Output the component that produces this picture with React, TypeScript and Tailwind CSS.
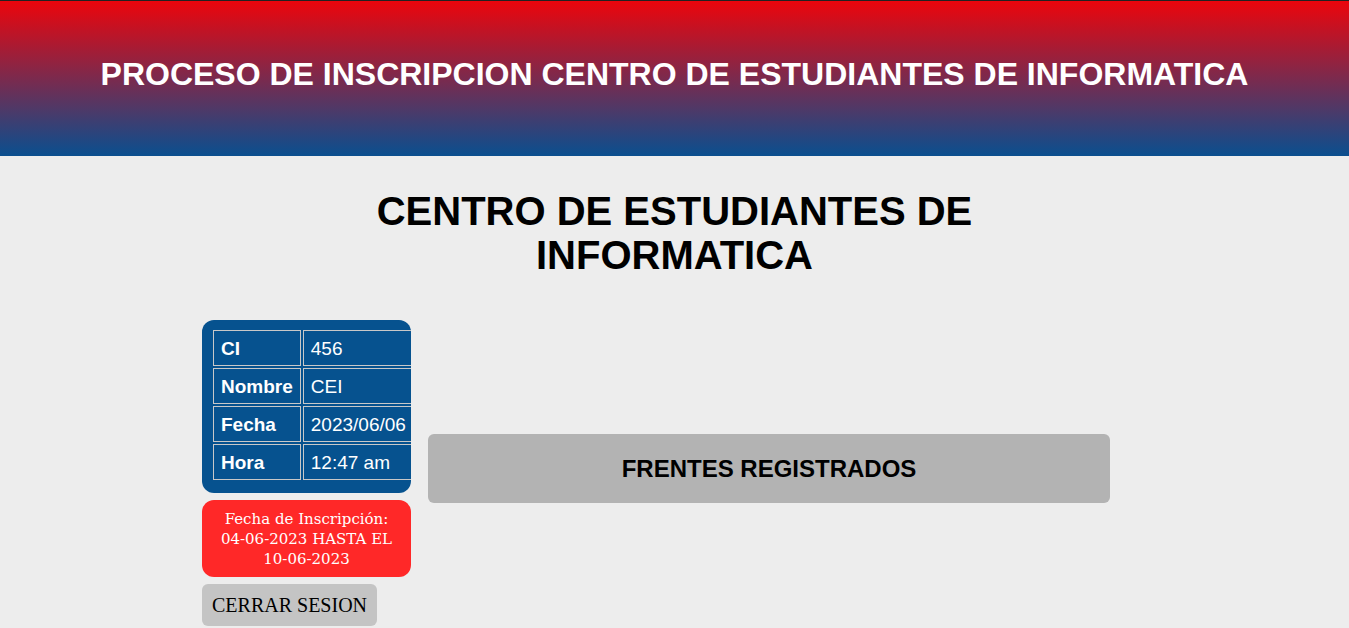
import React from "react";

export default function App() {
  const rows = [
    ["CI", "456"],
    ["Nombre", "CEI"],
    ["Fecha", "2023/06/06"],
    ["Hora", "12:47 am"],
  ];
  return (
    <div className="min-h-[628px] bg-[#ededed] font-['Liberation_Sans',Arial,sans-serif]">
      <header className="h-[156px] border-t border-[#222] bg-[linear-gradient(to_bottom,#ec050c,#0a4f8f)] flex items-center justify-center">
        <h1 className="text-white font-bold text-[32px] leading-none -mt-[10px]">
          PROCESO DE INSCRIPCION CENTRO DE ESTUDIANTES DE INFORMATICA
        </h1>
      </header>
      <h2 className="mx-auto mt-[33px] w-[640px] text-center text-black font-bold text-[40px] leading-[44px]">
        CENTRO DE ESTUDIANTES DE INFORMATICA
      </h2>
      <div className="mt-[43px] ml-[202px] flex items-center gap-[17px]">
        <div className="flex flex-col w-[209px]">
          <div className="bg-[#06528f] rounded-[12px] pt-[10px] pb-[13px] pl-[11px] overflow-hidden">
            <table className="border-separate border-spacing-[2px] -m-[2px] text-white text-[19px]">
              <tbody>
                {rows.map(([k, v]) => (
                  <tr key={k}>
                    <td className="border border-[#c8c8c8] w-[87px] h-[36px] px-[7px] font-bold leading-none">{k}</td>
                    <td className="border border-[#c8c8c8] w-[111px] h-[36px] px-[7px] whitespace-nowrap leading-none">{v}</td>
                  </tr>
                ))}
              </tbody>
            </table>
          </div>
          <div className="mt-[7px] bg-[#ff2828] rounded-[12px] h-[77px] flex items-center justify-center text-center text-white leading-[20px] px-[16px] font-['DejaVu_Serif','Liberation_Serif',serif]">
            <span className="text-[15px]">Fecha de Inscripción: 04-06-2023 HASTA EL 10-06-2023</span>
          </div>
          <button className="mt-[7px] self-start bg-[#c4c4c4] rounded-[6px] h-[42px] px-[10px] text-black text-[20px] font-['Liberation_Serif',serif]">
            CERRAR SESION
          </button>
        </div>
        <div className="w-[682px] h-[69px] bg-[#b3b3b3] rounded-[6px] flex items-center justify-center -mt-[9px]">
          <span className="font-bold text-[24px] text-black">FRENTES REGISTRADOS</span>
        </div>
      </div>
    </div>
  );
}
